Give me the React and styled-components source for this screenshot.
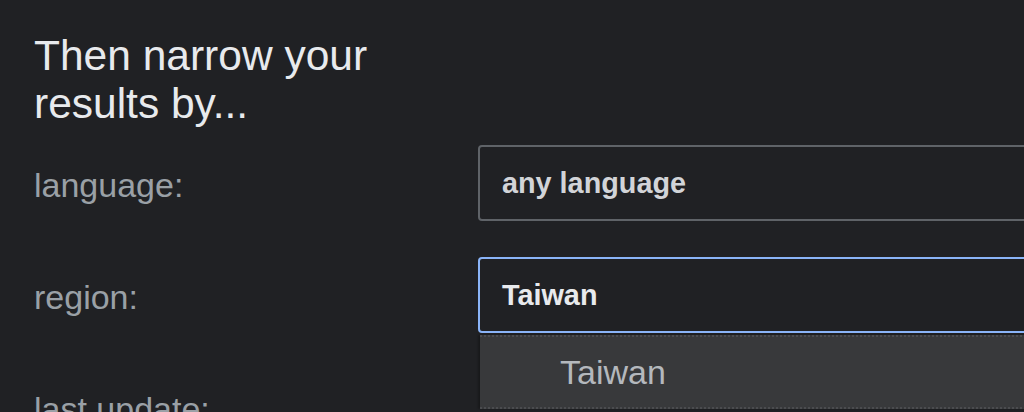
import React from "react";
import styled, { createGlobalStyle } from "styled-components";

const GlobalStyle = createGlobalStyle`
  html, body {
    margin: 0;
    padding: 0;
    background: #202124;
    overflow: hidden;
  }
  body {
    font-family: "Liberation Sans", Arial, sans-serif;
  }
`;

const Page = styled.div`
  width: 1024px;
  height: 412px;
  overflow: hidden;
  padding: 32px 0 0 34px;
  box-sizing: border-box;
`;

const Heading = styled.h2`
  margin: 0 0 17px;
  width: 444px;
  font-size: 42.5px;
  line-height: 48px;
  font-weight: 400;
  color: #e8eaed;
`;

const Form = styled.div`
  display: grid;
  grid-template-columns: 444px 620px;
  row-gap: 36px;
  align-items: center;
`;

const Label = styled.div`
  font-size: 34px;
  color: #9aa0a6;
  padding-top: 4px;
`;

const FieldWrap = styled.div`
  position: relative;
  z-index: ${(p) => (p.$open ? 2 : 1)};
`;

const Select = styled.div`
  height: 76px;
  box-sizing: border-box;
  display: flex;
  align-items: center;
  padding: 0 22px;
  border: 2px solid ${(p) => (p.$focused ? "#8ab4f8" : "#5f6368")};
  border-radius: 4px;
  font-size: 28.8px;
  font-weight: 700;
  color: ${(p) => (p.$focused ? "#e8eaed" : "#d2d4d8")};
  visibility: ${(p) => (p.$covered ? "hidden" : "visible")};
`;

const Menu = styled.div`
  position: absolute;
  top: 78px;
  left: 2px;
  right: 0;
  background: #38393b;
  border-top: 2px dotted #4b4c4f;
  border-bottom: 2px dotted #4b4c4f;
  box-shadow: -2px 0 2px rgba(0, 0, 0, 0.25);
`;

const MenuItem = styled.div`
  height: 70px;
  display: flex;
  align-items: center;
  padding-left: 80px;
  font-size: 34px;
  color: #b4b8bd;
`;

export default function App() {
  return (
    <>
      <GlobalStyle />
      <Page>
        <Heading>Then narrow your results by...</Heading>
        <Form>
          <Label>language:</Label>
          <FieldWrap>
            <Select>any language</Select>
          </FieldWrap>
          <Label>region:</Label>
          <FieldWrap $open>
            <Select $focused>Taiwan</Select>
            <Menu>
              <MenuItem>Taiwan</MenuItem>
            </Menu>
          </FieldWrap>
          <Label>last update:</Label>
          <FieldWrap>
            <Select $covered>anytime</Select>
          </FieldWrap>
        </Form>
      </Page>
    </>
  );
}
